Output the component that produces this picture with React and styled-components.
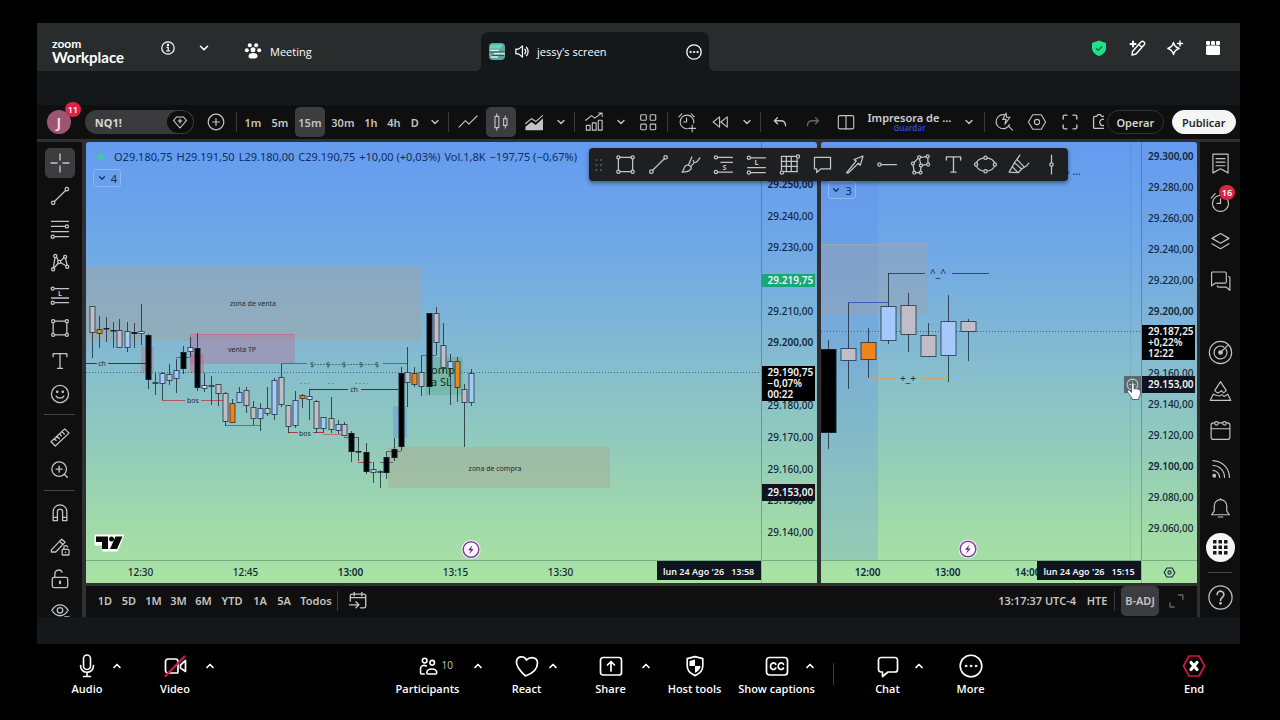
import React from "react";
import styled, { createGlobalStyle } from "styled-components";

const uiFont = '"Noto Sans", "Open Sans", sans-serif';

const GlobalStyle = createGlobalStyle`
  *, *::before, *::after { box-sizing: border-box; }
  body { margin: 0; background: #000; font-family: ${uiFont}; }
  button { font: inherit; color: inherit; background: none; border: 0; padding: 0; margin: 0; cursor: pointer; }
`;

/* ---------- window shell ---------- */

const Page = styled.div`
  min-height: 100vh;
  display: flex;
  flex-direction: column;
  background: #000;
  color: #fff;
`;

const MeetingWindow = styled.div`
  flex: 1;
  display: flex;
  flex-direction: column;
  margin: 23px 40px 0 37px;
  background: #14181b;
`;

const Header = styled.header`
  display: flex;
  align-items: stretch;
  height: 48px;
  background: #282c2d;
`;

const Brand = styled.div`
  width: 119px;
  padding: 14px 0 0 15px;
  font-family: Lato, sans-serif;
  font-weight: 700;
`;

const BrandTop = styled.div`
  font-size: 12px;
  line-height: 13px;
`;

const BrandName = styled.div`
  font-size: 15px;
  line-height: 15px;
`;

const HeaderIcons = styled.div`
  display: flex;
  gap: ${(p) => p.$gap}px;
  padding: 12px 15px 0 0;
  margin-left: ${(p) => (p.$end ? "auto" : "0")};
`;

const HeaderButton = styled.button`
  width: 24px;
  height: 26px;
  display: grid;
  place-items: center;
`;

const HeaderTab = styled.button`
  display: flex;
  align-items: center;
  gap: 8px;
  text-align: left;
  font-size: 11px;
  font-family: "Open Sans", sans-serif;
`;

const MeetingTab = styled(HeaderTab)`
  width: 250px;
  padding: 8px 0 0 13px;
`;

const ScreenTab = styled.div`
  position: relative;
  display: flex;
  align-items: center;
  width: 228px;
  margin-top: 9px;
  padding: 0 3px 0 8px;
  border-radius: 8px 8px 0 0;
  background: #14181b;
  &::before,
  &::after {
    content: "";
    position: absolute;
    bottom: 0;
    width: 6px;
    height: 6px;
  }
  &::before {
    left: -6px;
    background: radial-gradient(circle at 0 0, transparent 6px, #14181b 6px);
  }
  &::after {
    right: -6px;
    background: radial-gradient(circle at 100% 0, transparent 6px, #14181b 6px);
  }
`;

const ScreenTabName = styled(HeaderTab)`
  flex: 1;
`;

const Stage = styled.main`
  flex: 1;
  display: flex;
  flex-direction: column;
  padding: 34px 0 27px;
`;

/* ---------- trading workspace ---------- */

const Workspace = styled.section`
  flex: 1;
  display: flex;
  flex-direction: column;
  gap: 3px;
  min-width: 0;
  background: #303032;
  color: #c4c4c4;
`;

const TopBar = styled.div`
  display: flex;
  align-items: center;
  gap: 3px;
  height: 34px;
  padding: 0 4px 0 10px;
  background: #0f0f0f;
  font-size: 12px;
  font-weight: 600;
`;

const Avatar = styled.button`
  position: relative;
  width: 24px;
  height: 24px;
  border-radius: 50%;
  background: #9c5572;
  color: #f4dfe8;
  font-size: 15px;
  line-height: 24px;
`;

const Badge = styled.span`
  position: absolute;
  top: ${(p) => (p.$inner ? 1 : -8)}px;
  right: ${(p) => (p.$inner ? 0 : -10)}px;
  min-width: 16px;
  height: 15px;
  padding: 0 2px;
  border-radius: 8px;
  background: #dc2445;
  color: #fff;
  font-size: 9px;
  font-weight: 600;
  line-height: 15px;
  text-align: center;
`;

const SymbolPill = styled.button`
  display: flex;
  align-items: center;
  justify-content: space-between;
  width: 110px;
  height: 24px;
  margin: 0 3px 0 11px;
  padding: 0 1px 0 10px;
  border-radius: 12px;
  background: #3b3b3d;
  font-size: 11px;
  font-weight: 700;
  color: #d6d6d6;
`;

const SymbolMark = styled.span`
  display: grid;
  place-items: center;
  width: 26px;
  height: 22px;
  border-radius: 11px;
  background: #0f0f0f;
`;

const Tool = styled.button`
  flex: none;
  display: grid;
  place-items: center;
  width: ${(p) => p.$w || 30}px;
  height: ${(p) => p.$h || 30}px;
  border-radius: 5px;
  background: ${(p) => (p.$on ? "#3d3d3f" : "transparent")};
  color: ${(p) => (p.$dim ? "#666" : "inherit")};
  position: relative;
  overflow: ${(p) => (p.$clip ? "hidden" : "visible")};
`;

const IntervalButton = styled(Tool)`
  width: ${(p) => p.$w}px;
  font-size: 11px;
`;

const VRule = styled.span`
  flex: none;
  width: 1px;
  height: 20px;
  margin: 0 1px;
  background: #3a3a3c;
`;

const LayoutName = styled.button`
  width: 92px;
  display: flex;
  flex-direction: column;
  align-items: center;
  white-space: nowrap;
  color: #d0d0d0;
  font-size: 11px;
  line-height: 12px;
`;

const SaveHint = styled.span`
  font-size: 8px;
  line-height: 8px;
  color: #2f46c8;
`;

const PillButton = styled.button`
  height: 24px;
  width: ${(p) => p.$w}px;
  margin-left: ${(p) => (p.$push ? "auto" : "5px")};
  border-radius: 12px;
  border: 1px solid ${(p) => (p.$solid ? "#f5f5f5" : "#343436")};
  background: ${(p) => (p.$solid ? "#f5f5f5" : "transparent")};
  color: ${(p) => (p.$solid ? "#2a2a2a" : "#d4d4d4")};
  font-size: 11px;
  font-weight: 600;
`;

const WorkBody = styled.div`
  flex: 1;
  display: grid;
  grid-template-columns: 45px minmax(0, 1fr) 40px;
  grid-template-rows: minmax(0, 1fr);
  column-gap: 3px;
  min-height: 475px;
`;

const SideBar = styled.div`
  display: flex;
  flex-direction: column;
  align-items: center;
  gap: 3px;
  min-height: 0;
  height: 475px;
  overflow: hidden;
  padding-top: ${(p) => p.$top}px;
  background: #0f0f0f;
`;

const HRule = styled.span`
  flex: none;
  width: ${(p) => p.$w}px;
  height: 1px;
  margin: ${(p) => (p.$even ? "4px 0 3px" : "2px 0 4px")};
  background: #454547;
`;

const SideGap = styled.span`
  flex: none;
  height: 30px;
`;

const RoundApps = styled.span`
  display: grid;
  place-items: center;
  width: 29px;
  height: 29px;
  border-radius: 50%;
  background: #f5f5f5;
  color: #161616;
`;

const Center = styled.div`
  position: relative;
  display: flex;
  flex-direction: column;
  gap: 3px;
  min-width: 0;
  padding-left: 1px;
`;

const Panes = styled.div`
  flex: 1;
  display: grid;
  grid-template-columns: minmax(0, 66fr) minmax(0, 34fr);
  column-gap: 4px;
`;

const Pane = styled.div`
  display: grid;
  grid-template-columns: minmax(0, 1fr) 56px;
  grid-template-rows: minmax(0, 1fr) 23px;
  border-radius: 3px 3px 0 0;
  color: #10283a;
  background: linear-gradient(#649bf0 0%, #70a8e7 24%, #85bccf 50%, #93cdb9 71%, #a1daa9 87%, #a9e3a3 100%);
`;

const Plot = styled.div`
  position: relative;
  min-width: 0;
  overflow: hidden;
`;

const PlotCanvas = styled.svg`
  position: absolute;
  inset: 0;
  width: 100%;
  height: 100%;
  font-family: ${uiFont};
`;

const Legend = styled.div`
  position: relative;
  display: flex;
  align-items: center;
  gap: 4px;
  padding: 7px 0 0 12px;
  font-size: 11px;
  line-height: 16px;
  white-space: nowrap;
  color: #0e2d5c;
`;

const LiveDot = styled.span`
  width: 6px;
  height: 6px;
  margin-right: 6px;
  border-radius: 50%;
  background: #42c4a6;
  box-shadow: 0 0 0 2px rgba(66, 196, 166, 0.3);
`;

const CountButton = styled.button`
  position: relative;
  display: flex;
  align-items: center;
  justify-content: center;
  gap: 4px;
  width: 28px;
  height: 18px;
  margin: ${(p) => (p.$low ? "39px 0 0 7px" : "4px 0 0 7px")};
  border: 1px solid #8db9f3;
  border-radius: 3px;
  font-size: 11px;
  color: #0e2d5c;
`;

const PriceAxis = styled.div`
  position: relative;
  display: flex;
  flex-direction: column;
  justify-content: space-between;
  padding: ${(p) => p.$pad};
  border-left: 1px solid rgba(30, 70, 90, 0.35);
  font-size: 10px;
  line-height: 16px;
`;

const AxisPrice = styled.span`
  height: 16px;
  padding-left: 6px;
  font-weight: ${(p) => (p.$strong ? 600 : 500)};
`;

const PriceTag = styled.span`
  position: absolute;
  left: 0;
  top: ${(p) => p.$top}px;
  width: 53px;
  padding: ${(p) => p.$padY || 1}px 0 ${(p) => p.$padY || 1}px 6px;
  background: ${(p) => p.$bg};
  color: #f0f3f5;
  font-weight: 600;
  line-height: 11px;
  white-space: pre-line;
`;

const TimeAxis = styled.div`
  position: relative;
  display: flex;
  align-items: center;
  overflow: hidden;
  padding-left: ${(p) => p.$start}px;
  border-top: 1px solid rgba(30, 80, 70, 0.35);
  font-size: 10px;
`;

const TimeMark = styled.span`
  flex: none;
  width: ${(p) => p.$w}px;
  text-align: center;
  font-weight: ${(p) => (p.$strong ? 600 : 500)};
`;

const TimeTag = styled.span`
  position: absolute;
  right: 0;
  top: 0;
  width: 104px;
  height: 19px;
  background: #10141f;
  color: #f0f3f5;
  font-size: 9px;
  font-weight: 600;
  line-height: 22px;
  text-align: center;
  white-space: pre;
`;

const AxisCorner = styled.div`
  display: grid;
  place-items: center;
  border-top: 1px solid rgba(30, 80, 70, 0.35);
  border-left: 1px solid rgba(30, 70, 90, 0.25);
`;

const AddAtPrice = styled.button`
  position: absolute;
  right: 0;
  top: 234px;
  width: 17px;
  height: 17px;
  display: grid;
  place-items: center;
  background: #5a6a70;
  color: #c2ccd0;
`;

const Hand = styled.svg`
  position: absolute;
  right: -2px;
  top: 239px;
`;

const FloatingTools = styled.div`
  position: absolute;
  top: 6px;
  left: 504px;
  width: 479px;
  height: 33px;
  display: flex;
  align-items: center;
  border-radius: 4px;
  background: #1e1f20;
  box-shadow: 0 2px 4px rgba(0, 0, 0, 0.45);
`;

const Grip = styled.span`
  display: grid;
  place-items: center;
  width: 20px;
  color: #5c5c5c;
`;

const FloatTool = styled.button`
  flex: 1;
  display: grid;
  place-items: center;
`;

const BottomBar = styled.div`
  display: flex;
  align-items: center;
  height: 31px;
  padding: 0 9px 2px 7px;
  background: #0f0f0f;
  font-size: 11px;
  font-weight: 600;
`;

const RangeButton = styled.button`
  width: ${(p) => p.$w}px;
  white-space: nowrap;
`;

const BarEnd = styled.div`
  margin-left: auto;
  display: flex;
  align-items: center;
  gap: 5px;
`;

const ClockButton = styled.button`
  margin-right: 5px;
`;

/* ---------- meeting controls ---------- */

const Controls = styled.footer`
  display: flex;
  justify-content: space-between;
  height: 76px;
  padding: 10px 56px 0 48px;
`;

const ControlGroup = styled.div`
  display: flex;
  gap: 5px;
  padding-right: ${(p) => (p.$main ? 6 : 0)}px;
`;

const Control = styled.div`
  display: grid;
  width: ${(p) => p.$w}px;
  height: 44px;
`;

const ControlMain = styled.button`
  grid-area: 1 / 1;
  display: flex;
  flex-direction: column;
  align-items: center;
  gap: 3px;
  white-space: nowrap;
  font-family: "Open Sans", sans-serif;
  font-size: 11px;
  font-weight: 600;
  line-height: 16px;
`;

const ControlIcon = styled.span`
  position: relative;
  display: grid;
  place-items: center;
  height: 24px;
`;

const Count = styled.span`
  position: absolute;
  left: 100%;
  top: 3px;
  margin-left: 4px;
  font-size: 10px;
  font-weight: 400;
  color: #c9c9c9;
`;

const Caret = styled.button`
  grid-area: 1 / 1;
  justify-self: end;
  align-self: start;
  display: grid;
  place-items: center;
  width: 18px;
  height: 24px;
`;

const ControlRule = styled.span`
  width: 1px;
  height: 22px;
  margin: 9px 9px 0;
  background: #3c3c3c;
`;

/* ---------- drawings ---------- */

const Svg = ({ s = 26, box = 28, sw = 1.3, children }) => (
  <svg
    width={s}
    height={s}
    viewBox={`0 0 ${box} ${box}`}
    fill="none"
    stroke="currentColor"
    strokeWidth={sw}
    strokeLinecap="round"
    strokeLinejoin="round"
    aria-hidden="true"
  >
    {children}
  </svg>
);

const Dots = ({ at, r = 1.8 }) => at.map(([x, y]) => <circle key={`${x}-${y}`} cx={x} cy={y} r={r} />);

const Letter = ({ x, y, children }) => (
  <text x={x} y={y} fontSize="8" fontWeight="700" textAnchor="middle" fill="currentColor" stroke="none">
    {children}
  </text>
);

const Chevron = ({ up, s = 12, sw = 1.4 }) => (
  <Svg s={s} box={12} sw={sw}>
    <path d={up ? "M3 7.5 6 4.5l3 3" : "M3 4.5l3 3 3-3"} />
  </Svg>
);

const icons = {
  cross: <path d="M14 3.5v7M14 17.5v7M3.500 14h7M17.500 14h7" strokeWidth="1.600" />,
  trend: (<><Dots at={[[6, 22], [22, 6]]} r={2} /><path d="M7.500 20.500 20.500 7.500" /></>),
  fib: (<><path d="M4 5h20M4 11h16M4 17h20M8 23h16" /><Dots at={[[22, 11], [5.5, 23]]} /></>),
  pattern: (<><Dots at={[[8.500, 7], [20, 8], [13, 14], [6, 22.500], [22.500, 19.500]]} /><path d="M8.200 9 6.300 20.500M10 8.300l2 4M14.500 13 18.500 9M20.500 10l1.700 7.500M12 15.500 7 21M15 14.800l6 3.500" /></>),
  longPos: (<><path d="M8 6.500h16M4 17.500h20M8 23h16" /><Dots at={[[5.500, 6.500], [5.500, 23]]} /><Letter x={14} y={15}>L</Letter></>),
  rect: (<><Dots at={[[6, 6], [22, 6], [6, 22], [22, 22]]} /><path d="M8 6h12M8 22h12M6 8v12M22 8v12" /></>),
  text: <path d="M6 9V5.500h16V9M14 5.500v17M11 22.500h6" strokeWidth="1.500" />,
  smile: (<><circle cx="14" cy="14" r="10" /><path d="M9.500 16.500c1.500 3 7.500 3 9 0" /><circle cx="10.800" cy="11.500" r=".8" fill="currentColor" /><circle cx="17.200" cy="11.500" r=".8" fill="currentColor" /></>),
  ruler: <path d="M3.500 19.500 19.500 4.500l5 5-16 15zM7.500 16l2 2M10.500 13.200l2.800 2.800M13.500 10.500l2 2M16.300 7.800l2.700 2.700" />,
  zoomIn: (<><circle cx="13" cy="13" r="8.500" /><path d="M13 9.500v7M9.500 13h7M19 19l3.500 3.500" strokeWidth="1.600" /></>),
  magnet: <path d="M6 23V12.500a8 8 0 0 1 16 0V23h-5V12.500a3 3 0 0 0-6 0V23zM6 19h5M17 19h5" />,
  pencilLock: (<><path d="M4 18.500 16 6l4 3.500L9 21H4zM13.500 8.500l4 4" /><rect x="16.500" y="18" width="8" height="6.500" rx="1" /><path d="M18.500 18v-2a2.200 2.200 0 0 1 4.300-.8M20.500 21v.6" /></>),
  lock: (<><rect x="5" y="12" width="18" height="12" rx="2" /><path d="M8 12V8a4.500 4.500 0 0 1 8.500-2" /><path d="M14 17v2" strokeWidth="2.500" /></>),
  eye: (<><path d="M4.500 12c5-8.500 14-8.500 19 0-5 8.500-14 8.500-19 0z" /><circle cx="14" cy="12" r="3.200" /><path d="M20 20.500h4" strokeWidth="3" /></>),
  lineChart: <path d="M3.500 20 11 12.500l4 4L24.500 7" />,
  candles: (<><path d="M9 4.500v3M9 20.500v3M19 7v3M19 18v3" /><rect x="7" y="7.500" width="4.500" height="13" /><rect x="17" y="10" width="4" height="8" /></>),
  area: (<><path d="M4 23.500v-4l7-5.500 5 3.500 8.500-8v14z" fill="currentColor" stroke="none" /><path d="M4 16l7-6 5 3.500L24 6.500" /></>),
  indicators: (<><path d="M4.500 12 11 6.500l4 3 8-6M19.500 3.500h4v4" /><path d="M5 23.500v-5.500h4.500v5.500zM12 23.500v-8.500h4.500v8.500zM19 23.500V12h4.500v11.500z" /></>),
  tiles: (<><rect x="5.500" y="5.500" width="6.500" height="6.500" rx="1" /><rect x="16.500" y="5.500" width="6.500" height="6.500" rx="1" /><rect x="5.500" y="16.500" width="6.500" height="6.500" rx="1" /><rect x="16.500" y="16.500" width="6.500" height="6.500" rx="1" /></>),
  alarmAdd: (<><path d="M14.500 21.900A8 8 0 1 1 21.900 15M13.500 9.500V14H10M4.500 8 8 4.500M19 4.500 22.500 8M20 17.500v8M16 21.500h8" /></>),
  replay: <path d="M13.500 8v12L6 14zM22.500 8v12L15 14z" />,
  undo: <path d="M11 9 7.500 12.500 11 16M8 12.500h6.500c4 0 6 2 6 6" strokeWidth="1.600" />,
  redo: <path d="M17 9l3.500 3.500L17 16M20 12.500h-6.500c-4 0-6 2-6 6" strokeWidth="1.600" />,
  split: (<><rect x="5" y="6.500" width="18" height="15.500" rx="1.500" /><path d="M14 6.500V22" /></>),
  quick: (<><path d="M14.500 5.500A8.200 8.200 0 1 0 20.500 17M19 18.500l5 5" /><path d="M16.500 3.500 12.500 11h4l-1.500 5.500 6-8h-4z" /></>),
  hex: (<><path d="M9 5.500h10l5 8.500-5 8.500H9L4 14z" /><circle cx="14" cy="14" r="3" /></>),
  full: <path d="M6 10.500V8a2 2 0 0 1 2-2h2.500M17.500 6H20a2 2 0 0 1 2 2v2.500M22 17.500V20a2 2 0 0 1-2 2h-2.500M10.500 22H8a2 2 0 0 1-2-2v-2.500" strokeWidth="1.600" />,
  camera: <path d="M19 7.500h-3l-1.500-2h-3l-1.500 2H8a1.500 1.500 0 0 0-1.500 1.500v11a1.500 1.500 0 0 0 1.500 1.500h11M19 11a3.800 3.800 0 1 0 0 7" strokeWidth="1.500" />,
  brush: <path d="M4.500 22.500c1.500-1 1.800-3 2.500-5 1-3 5-4 7-1.500s0 6.500-9.500 6.500zM12 14l3.500-8.500M14.500 16l3-3.500M17 9.500c1.500 3.500 3 3.500 7.500-3" />,
  shortPos: (<><path d="M8 6h16M11 11.500h13M8 22.500h16" /><Dots at={[[5.500, 6], [5.500, 22.500]]} /><Letter x={15} y={20}>S</Letter></>),
  grid: (<><path d="M5 5h16.500M5 10.500h18M5 16h18M8 22h15M5 5v15M10.500 5v17M16 5v17M22.500 8v14" /><Dots at={[[23.500, 5], [5.500, 23]]} /></>),
  comment: <path d="M5 6h18v13H12l-4.500 4v-4H5z" />,
  arrow: <path d="M5 23.500 16 10l-2.500-1.500L23.500 4.500l-3 10.500-2-2.500L7 23.500z" />,
  ray: (<><circle cx="5" cy="14" r="1.800" /><path d="M7 14h17" /></>),
  path: (<><Dots at={[[5.500, 13], [12.500, 6], [22, 5], [22.500, 14], [14.500, 15], [7, 23], [14, 23]]} r={1.700} /><path d="M6.700 11.800 11.300 7.200M14.200 5.900l6.100-.7M22.200 6.700l.2 5.600M20.800 14.200l-4.600.6M5.700 14.700 6.800 21.300M8.700 23h3.600M14.400 16.700 14.100 21.300M12.800 7.700 14.200 13.300" /></>),
  ellipse: (<><ellipse cx="14" cy="14" rx="10.500" ry="7.500" /><g fill="#1e1f20"><Dots at={[[14, 6.500], [14, 21.500], [3.500, 14], [24.500, 14]]} /></g></>),
  highlighter: <path d="M3.500 22.500 9.500 12l8 7-3.500 4zM9.500 12l6-8.500M17.500 19l5.500-3.500 2.500-3M7 16.500l5.500 5.500M12.500 8.500l8 8.500" />,
  vline: (<><path d="M14 3.500v8.500M14 16v8.500" /><circle cx="14" cy="14" r="1.900" /></>),
  watch: <path d="M5.500 3.500h17v21l-8.500-4.500-8.500 4.500zM9 8.500h10M9 12.500h10M9 16.500h10" />,
  alarm: (<><circle cx="14" cy="15" r="9" /><path d="M14 9.500V15h-4M3.500 9 8 4" /></>),
  layers: <path d="M14 5 4.500 10.500 14 16l9.500-5.500zM4.500 16.500 14 22l9.500-5.500" />,
  chat: <path d="M5 4.500h14a1.500 1.500 0 0 1 1.500 1.500v9.500a1.500 1.500 0 0 1-1.500 1.500H8L4 20V5.500a1 1 0 0 1 1-1zM23 9.500a1.500 1.500 0 0 1 1.500 1.500V25L20.500 21.500H12a2 2 0 0 1-1.500-1.500" />,
  radar: (<><circle cx="14" cy="14" r="12.500" /><path d="M20 10a7.200 7.200 0 1 1-2.500-2.300M14 14 22.500 5.500" /><circle cx="14" cy="14" r="2" fill="currentColor" /></>),
  peaks: <path d="M14 3 20.500 13l-3 2.500-2.500-2.500-2.500 2-2 .5-3-2.500zM5.800 17 2.500 24h23l-3.300-7-4.200 2.500-2.500-2-2.500 1.500-3-.5z" />,
  calendar: (<><rect x="3.500" y="5.500" width="21" height="18.500" rx="2.500" /><path d="M3.500 12h21" /><g fill="#0f0f0f"><Dots at={[[9.500, 6], [18.500, 6]]} r={2} /></g></>),
  rss: (<><circle cx="7" cy="21" r="1.500" fill="currentColor" /><path d="M5.500 15a8 8 0 0 1 7.500 8M5.500 9.500a13 13 0 0 1 13 13.500M5.500 4a19 19 0 0 1 18.500 19" /></>),
  bell: <path d="M14 4a7 7 0 0 0-7 7v6l-3 4h20l-3-4v-6a7 7 0 0 0-7-7zM14 4V3M11.500 23.500h5" />,
  help: (<><circle cx="14" cy="14" r="12" /><path d="M10.500 11a3.500 3.500 0 1 1 5.500 2.800c-1.300 1-2 1.500-2 3.200" strokeWidth="1.700" /><circle cx="14" cy="20" r=".8" fill="currentColor" /></>),
  gotoDate: <path d="M5 14V8a2 2 0 0 1 2-2h14a2 2 0 0 1 2 2v12a2 2 0 0 1-2 2h-4M5 10h18M9.500 4v4M18.500 4v4M4 18.500h11M11.500 15l3.500 3.500-3.500 3.500" strokeWidth="1.600" />,
  corners: <path d="M17 7h5v5M12 21H7v-5" />,
};

const Icon = ({ n, s, sw }) => <Svg s={s} sw={sw}>{icons[n]}</Svg>;

const colours = { g: "#c0bdc8", b: "#a5c9fb", o: "#f08418", k: "#000", w: "#c5dcf4" };

/* x, high, body top, body bottom, low, colour */
const leftCandles = [
  [92, 306, 306, 333, 358, "g"], [99, 316, 329, 334, 348, "o"], [106, 317, 328, 329, 342, "k"],
  [113, 322, 330, 331, 348, "k"], [119, 319, 330, 348, 348, "g"], [127, 322, 331, 348, 352, "b"],
  [134, 323, 332, 334, 348, "k"], [141, 304, 331, 334, 345, "w"], [148, 334, 335, 380, 389, "k"],
  [155, 373, 382, 384, 395, "g"], [162, 372, 373, 384, 400, "b"], [169, 364, 374, 381, 385, "g"],
  [176, 359, 370, 379, 393, "b"], [183, 346, 352, 369, 374, "k"], [190, 337, 347, 352, 357, "w"],
  [197, 333, 348, 388, 391, "k"], [204, 373, 385, 389, 392, "w"], [211, 376, 385, 387, 405, "b"],
  [218, 384, 384, 394, 406, "g"], [225, 392, 393, 422, 426, "g"], [232, 399, 403, 423, 423, "o"],
  [239, 387, 392, 403, 403, "b"], [246, 387, 390, 406, 413, "g"], [253, 401, 407, 419, 425, "g"],
  [260, 403, 408, 419, 431, "b"], [267, 387, 408, 414, 416, "g"], [274, 378, 380, 415, 420, "b"],
  [281, 364, 377, 405, 407, "g"], [288, 405, 405, 427, 433, "g"], [295, 391, 400, 426, 428, "b"],
  [302, 394, 395, 399, 408, "o"], [309, 390, 396, 400, 420, "w"], [316, 400, 401, 429, 433, "g"],
  [323, 417, 417, 429, 433, "b"], [331, 397, 418, 430, 433, "g"], [338, 420, 424, 431, 434, "b"],
  [344, 422, 424, 436, 436, "g"], [351, 431, 433, 452, 462, "k"], [358, 437, 451, 452, 461, "k"],
  [366, 443, 452, 472, 474, "k"], [373, 462, 469, 473, 483, "b"], [380, 470, 471, 473, 488, "g"],
  [386, 452, 457, 473, 479, "k"], [394, 438, 449, 458, 461, "k"], [401, 367, 373, 447, 451, "k"],
  [407, 347, 372, 383, 407, "g"], [414, 367, 373, 385, 387, "o"], [421, 356, 372, 387, 396, "g"],
  [429, 313, 313, 387, 395, "k"], [436, 307, 313, 343, 355, "g"], [443, 323, 345, 368, 372, "g"],
  [450, 354, 361, 369, 405, "b"], [457, 357, 361, 388, 402, "o"], [464, 384, 389, 403, 447, "g"],
  [471, 369, 373, 403, 406, "b"],
];

const rightCandles = [
  [828, 340, 349, 433, 449, "k"], [848, 303, 348, 361, 389, "g"], [868, 328, 342, 360, 378, "o"],
  [888, 273, 306, 341, 344, "b"], [908, 293, 305, 335, 352, "g"], [928, 323, 335, 357, 357, "g"],
  [948, 295, 321, 356, 382, "b"], [968, 319, 321, 332, 361, "g"],
];

const Candles = ({ data, w }) =>
  data.map(([x, hi, top, bot, lo, c]) => (
    <g key={x} stroke="#14202c" strokeWidth="1">
      <line x1={x + 0.5} x2={x + 0.5} y1={hi} y2={lo} strokeOpacity=".75" />
      <rect x={x - (w - 1) / 2} y={top + 0.5} width={w} height={Math.max(bot - top - 1, 0.5)} fill={colours[c]} strokeOpacity={c === "k" ? 1 : 0.7} />
    </g>
  ));

const Bolt = ({ x, y }) => (
  <g>
    <circle cx={x} cy={y} r="9.500" fill="#fff" fillOpacity=".8" />
    <circle cx={x} cy={y} r="7.800" fill="#fff" stroke="#8a3aa8" strokeWidth="1.500" />
    <path d={`M${x + 1.5} ${y - 4.5}l-4.500 5.200h2.700l-1.500 4 4.500-5.200h-2.700z`} fill="#7b1fa2" />
  </g>
);

const Label = ({ x, y, size = 7, children, fill = "#1c2c34" }) => (
  <text x={x} y={y} fontSize={size} textAnchor="middle" fill={fill}>{children}</text>
);

const Line = ({ x1, x2, y, c = "#27404a", o = 1, dash }) => (
  <line x1={x1} x2={x2} y1={y + 0.5} y2={y + 0.5} stroke={c} strokeOpacity={o} strokeDasharray={dash} />
);

const LeftDrawing = () => (
  <PlotCanvas role="img" aria-label="NQ1! 15m">
    <g transform="translate(-86 -142)">
      <rect x="86" y="266" width="335" height="75" fill="#a2a2a0" fillOpacity=".48" />
      <rect x="388" y="447" width="222" height="41" fill="#b29c80" fillOpacity=".34" />
      <rect x="190" y="334" width="105" height="30" fill="#b07a9e" fillOpacity=".48" />
      <path d="M190 334.500h105" stroke="#b8788e" />
      <rect x="141" y="346" width="13" height="26" fill="#c86f84" fillOpacity=".4" />
      <rect x="190" y="354" width="14" height="19" fill="#d0607c" fillOpacity=".45" />
      <rect x="393" y="406" width="14" height="32" fill="#5f8fe0" fillOpacity=".4" />
      <rect x="425" y="357" width="38" height="38" fill="#5aa878" fillOpacity=".35" />
      <Line x1={86} x2={762} y={372} c="#3a6c74" dash="1 2" />
      <Line x1={86} x2={97} y={363} />
      <Line x1={108} x2={147} y={363} />
      <Label x={102} y={366}>ch</Label>
      <Line x1={162} x2={185} y={400} c="#b05a60" />
      <Line x1={201} x2={223} y={400} c="#b05a60" />
      <Label x={193} y={403}>bos</Label>
      <Line x1={225} x2={260} y={425} c="#c05048" />
      <Line x1={288} x2={298} y={432} c="#b03844" />
      <Line x1={313} x2={323} y={432} c="#b03844" />
      <Line x1={323} x2={345} y={434} c="#c07070" />
      <Label x={305} y={436}>bos</Label>
      <Line x1={281} x2={307} y={363} c="#a04c68" />
      <Line x1={383} x2={408} y={363} c="#a04c68" />
      <Line x1={314} x2={376} y={364} dash="2 1" o={0.6} />
      {[312, 328, 344, 361, 377].map((x) => <Label key={x} x={x} y={367} fill="#274c3c">$</Label>)}
      <Line x1={300} x2={309} y={383} c="#5e98a0" dash="2 2" />
      <Line x1={328} x2={336} y={383} c="#5e98a0" dash="2 2" />
      <Line x1={355} x2={368} y={383} c="#5e98a0" dash="2 2" />
      <Line x1={309} x2={348} y={389} />
      <Line x1={361} x2={398} y={389} />
      <Label x={354} y={392}>ch</Label>
      <Line x1={421} x2={436} y={355} c="#3a6aa0" />
      <Line x1={358} x2={372} y={462} c="#b84050" />
      <Line x1={380} x2={393} y={462} c="#5a6a80" />
      <Line x1={386} x2={401} y={451} c="#5a6a80" />
      <Line x1={344} x2={358} y={437} c="#5a6a60" />
      <Line x1={176} x2={190} y={357} c="#3a6aa0" />
      <Label x={253} y={306}>zona de venta</Label>
      <Label x={242} y={352}>venta TP</Label>
      <Label x={495} y={471}>zona de compra</Label>
      <Candles data={leftCandles} w={5} />
      <g fontSize="11" fill="#123020">
        <text x="431" y="374">omp</text>
        <text x="431" y="386">a SL</text>
      </g>
      <path d="M95.500 535.500h27.500l-6 15h-14v-6h-7.500z" fill="#fff" stroke="#fff" strokeWidth="2" strokeLinejoin="round" />
      <path d="M96 536.500h12v12.500h-6v-7h-6zM115.500 536.500h7l-5.500 12.500h-7z" fill="#0a0a0a" />
      <circle cx="111.500" cy="539" r="2.500" fill="#0a0a0a" />
      <Bolt x={471} y={549.5} />
    </g>
  </PlotCanvas>
);

const RightDrawing = () => (
  <PlotCanvas role="img" aria-label="NQ1! 1h">
    <g transform="translate(-821 -142)">
      <rect x="821" y="142" width="57" height="418" fill="#5582ee" fillOpacity=".22" />
      <rect x="821" y="244" width="107" height="71" fill="#a2a0a4" fillOpacity=".4" />
      <path d="M821 244.500h107" stroke="#9cb0a0" strokeOpacity=".6" />
      <Line x1={821} x2={1141} y={331} c="#3a6c84" dash="1 2" />
      <line x1="1130.500" x2="1130.500" y1="142" y2="560" stroke="#2c5c72" strokeOpacity=".12" />
      <Line x1={848} x2={888} y={302} c="#3a5fb4" />
      <Line x1={888} x2={925} y={273} c="#2743b8" />
      <Line x1={952} x2={989} y={273} c="#2743b8" />
      <Label x={938} y={277} size={10} fill="#16304e">^_^</Label>
      <Line x1={870} x2={895} y={378} c="#bfa978" />
      <Line x1={922} x2={948} y={378} c="#bfa978" />
      <Label x={908} y={382} size={10} fill="#16304e">+_+</Label>
      <Candles data={rightCandles} w={15} />
      <text x="1063" y="175" fontSize="11" fill="#0e2d5c">5 ...</text>
      <Bolt x={968} y={549} />
    </g>
  </PlotCanvas>
);

/* ---------- data ---------- */

const quote = ["O29.180,75", "H29.191,50", "L29.180,00", "C29.190,75", "+10,00 (+0,03%)", "Vol.1,8K", "−197,75 (−0,67%)"];

/* An empty entry leaves room for a level that a price tag occupies. */
const leftPrices = ["29.250,00", "29.240,00", "29.230,00", "", "29.210,00", "29.200,00", "", "29.180,00", "29.170,00", "29.160,00", "29.150,00", "29.140,00"];
const rightPrices = ["29.300,00", "29.280,00", "29.260,00", "29.240,00", "29.220,00", "29.200,00", "", "29.160,00", "29.140,00", "29.120,00", "29.100,00", "29.080,00", "29.060,00"];
const strongPrices = ["29.250,00", "29.200,00", "29.150,00", "29.300,00", "29.100,00"];

const Axis = ({ prices, pad, children }) => (
  <PriceAxis $pad={pad}>
    {prices.map((p, i) => <AxisPrice key={i} $strong={strongPrices.includes(p)}>{p}</AxisPrice>)}
    {children}
  </PriceAxis>
);

const intervals = [["1m", 24], ["5m", 24], ["15m", 30], ["30m", 30], ["1h", 20], ["4h", 20], ["D", 16]];
const ranges = [["1D", 24], ["5D", 24], ["1M", 25], ["3M", 25], ["6M", 25], ["YTD", 32], ["1A", 24], ["5A", 24], ["Todos", 40]];

const topTools = [
  ["lineChart", "Línea"], ["candles", "Velas"], ["area", "Área"], ["v"], ["|"],
  ["indicators", "Indicadores"], ["v"], ["tiles", "Plantillas"], ["|"],
  ["alarmAdd", "Alerta"], ["replay", "Repetición"], ["v"], ["|"],
  ["undo", "Deshacer"], ["redo", "Rehacer"], ["split", "Diseño"],
];

const drawTools = ["cross", "trend", "fib", "pattern", "longPos", "rect", "text", "smile", "|", "ruler", "zoomIn", "|", "magnet", "pencilLock", "lock", "eye"];
const floatTools = ["rect", "trend", "brush", "shortPos", "longPos", "grid", "comment", "arrow", "ray", "path", "text", "ellipse", "highlighter", "vline"];
const sideTools = ["watch", "alarm", "layers", "chat", "", "radar", "peaks", "calendar", "rss", "bell"];

const MeetingControl = ({ label, w, caret, count, children }) => (
  <Control $w={w}>
    <ControlMain>
      <ControlIcon>{children}{count && <Count>{count}</Count>}</ControlIcon>
      {label}
    </ControlMain>
    {caret && <Caret aria-label={`${label} options`}><Chevron up sw={1.7} /></Caret>}
  </Control>
);

/* ---------- sections ---------- */

const MeetingHeader = () => (
  <Header>
    <Brand>
      <BrandTop>zoom</BrandTop>
      <BrandName>Workplace</BrandName>
    </Brand>
    <HeaderIcons $gap={12}>
      <HeaderButton aria-label="Meeting information">
        <Svg s={16} box={16} sw={1.2}><circle cx="8" cy="8" r="6.200" /><path d="M7 7.300h1.200v3.500M6.500 11h3.200" /><circle cx="8" cy="5" r=".6" fill="currentColor" /></Svg>
      </HeaderButton>
      <HeaderButton aria-label="More views"><Chevron s={14} /></HeaderButton>
    </HeaderIcons>
    <MeetingTab>
      <svg width="18" height="18" viewBox="0 0 18 18" fill="#fff" aria-hidden="true">
        <circle cx="5.800" cy="3.300" r="2" /><circle cx="12.200" cy="3.300" r="2" />
        <circle cx="2.800" cy="8.300" r="2" /><circle cx="15.200" cy="8.300" r="2" /><circle cx="9" cy="7.800" r="2.500" />
        <path d="M4.500 14c0-2 2-3 4.500-3s4.500 1 4.500 3-1 2.500-4.500 2.500S4.500 16 4.500 14z" />
      </svg>
      Meeting
    </MeetingTab>
    <ScreenTab>
      <ScreenTabName>
        <svg width="17" height="17" viewBox="0 0 17 17" aria-hidden="true">
          <rect width="16" height="17" rx="4" fill="#5fa59c" />
          <path d="M2 2.500h12M1 4.500h11" stroke="#63d6c2" strokeWidth="2" />
          <path d="M1 7.500h9M5 10.500h11M2 14h7" stroke="#d9eee8" strokeWidth="1.500" />
          <path d="M0 9h16M3 12.500h12" stroke="#2d5a57" strokeWidth="1.200" />
        </svg>
        <Svg s={15} box={16} sw={1.3}><path d="M2 5.500h3L9 2v12l-4-3.500H2zM11.500 5.500c1.300 1.500 1.300 3.500 0 5M13.300 3.500c2.300 2.500 2.300 6.500 0 9" /></Svg>
        jessy's screen
      </ScreenTabName>
      <HeaderButton aria-label="Screen options">
        <Svg s={18} box={18} sw={1.3}><circle cx="9" cy="9" r="7.200" /><g fill="currentColor" strokeWidth=".6"><Dots at={[[5.5, 9], [9, 9], [12.5, 9]]} r={0.8} /></g></Svg>
      </HeaderButton>
    </ScreenTab>
    <HeaderIcons $gap={14} $end>
      <HeaderButton aria-label="Security">
        <svg width="18" height="18" viewBox="0 0 18 18" aria-hidden="true"><path d="M9 1.500 16 4v5c0 4-3 6.500-7 8-4-1.500-7-4-7-8V4z" fill="#1fe28a" /><path d="M6 9.200 8.200 11.300 12 7.500" fill="none" stroke="#14603f" strokeWidth="1.200" /></svg>
      </HeaderButton>
      <HeaderButton aria-label="Annotate">
        <Svg s={18} box={18} sw={1.4}><path d="M4.500 12.500 11.500 4.500 13 3a2 2 0 0 1 3 3l-8 9-4 1zM11 5.500l2.500 2.500" /><path d="M5 2.500v5M2.500 5h5" strokeWidth="2" /></Svg>
      </HeaderButton>
      <HeaderButton aria-label="AI Companion">
        <Svg s={18} box={18} sw={1.4}><path d="M7.500 3.500c.8 3.500 2 4.800 5.700 6-3.700 1.200-4.900 2.500-5.700 6-.8-3.500-2-4.800-5.700-6 3.700-1.200 4.900-2.500 5.700-6zM14 2v5M11.500 4.500h5" /></Svg>
      </HeaderButton>
      <HeaderButton aria-label="View">
        <svg width="16" height="16" viewBox="0 0 16 16" fill="#fff" aria-hidden="true"><rect x="1" y="1" width="4" height="4" rx="1" /><rect x="6" y="1" width="4" height="4" rx="1" /><rect x="11" y="1" width="4" height="4" rx="1" /><rect x="1" y="5.500" width="14" height="9.500" rx="1.500" /></svg>
      </HeaderButton>
    </HeaderIcons>
  </Header>
);

const WorkspaceTop = () => (
  <TopBar>
    <Avatar aria-label="Perfil">J<Badge>11</Badge></Avatar>
    <SymbolPill>
      NQ1!
      <SymbolMark><Svg s={16} box={16} sw={1.1}><path d="M4.500 3h7L14.500 6.500 8 14 1.500 6.500zM8 5v4M6 7h4" /></Svg></SymbolMark>
    </SymbolPill>
    <Tool $w={32} aria-label="Comparar"><Svg s={18} box={18} sw={1.2}><circle cx="9" cy="9" r="7.800" /><path d="M9 5.500v7M5.500 9h7" /></Svg></Tool>
    <VRule />
    {intervals.map(([t, w]) => <IntervalButton key={t} $w={w} $on={t === "15m"}>{t}</IntervalButton>)}
    <Tool $w={18} aria-label="Más intervalos"><Chevron /></Tool>
    <VRule />
    {topTools.map(([n, label], i) => {
      if (n === "|") return <VRule key={i} />;
      if (n === "v") return <Tool key={i} $w={18} aria-label="Más opciones"><Chevron /></Tool>;
      return <Tool key={i} $on={n === "candles"} $dim={n === "redo"} aria-label={label}><Icon n={n} s={24} /></Tool>;
    })}
    <LayoutName>Impresora de ...<SaveHint>Guardar</SaveHint></LayoutName>
    <Tool $w={22} aria-label="Diseños"><Chevron /></Tool>
    <VRule />
    <Tool aria-label="Búsqueda rápida"><Icon n="quick" s={24} /></Tool>
    <Tool aria-label="Configuración"><Icon n="hex" s={24} /></Tool>
    <Tool aria-label="Pantalla completa"><Icon n="full" s={24} /></Tool>
    <Tool $w={16} $clip aria-label="Captura"><Icon n="camera" s={24} /></Tool>
    <PillButton $w={57} $push>Operar</PillButton>
    <PillButton $w={65} $solid>Publicar</PillButton>
  </TopBar>
);

const LeftPane = () => (
  <Pane>
    <Plot>
      <LeftDrawing />
      <Legend>
        <LiveDot />
        {quote.map((q) => <span key={q}>{q}</span>)}
      </Legend>
      <CountButton><Chevron s={10} />4</CountButton>
    </Plot>
    <Axis prices={leftPrices} pad="34px 0 20px">
      <PriceTag $top={132} $bg="#16a878">29.219,75</PriceTag>
      <PriceTag $top={224} $bg="#000">{"29.190,75\n−0,07%\n00:22"}</PriceTag>
      <PriceTag $top={342} $padY={3} $bg="#10141f">29.153,00</PriceTag>
    </Axis>
    <TimeAxis $start={2}>
      {["12:30", "12:45", "13:00", "13:15", "13:30"].map((t) => <TimeMark key={t} $w={105} $strong={t === "13:00"}>{t}</TimeMark>)}
      <TimeTag>{"lun 24 Ago '26   13:58"}</TimeTag>
    </TimeAxis>
    <AxisCorner />
  </Pane>
);

const RightPane = () => (
  <Pane>
    <Plot>
      <RightDrawing />
      <CountButton $low><Chevron s={10} />3</CountButton>
      <AddAtPrice aria-label="Añadir en el precio"><Svg s={13} box={14} sw={1.1}><circle cx="7" cy="7" r="5.800" /><path d="M7 4v6M4 7h6" /></Svg></AddAtPrice>
      <Hand width="18" height="20" viewBox="0 0 18 20" aria-hidden="true">
        <path d="M6.500 3c0-1.800 2.600-1.800 2.600 0v5c2.500-.5 6.400.2 6.400 2.500 0 3.500-.8 5-1.800 6.500v1.500H7V17c-1-1.500-3.500-4.500-4.500-6.300-.7-1.400 1-2.200 2-1.200l2 2z" fill="#fff" stroke="#3c4a50" strokeWidth=".8" />
      </Hand>
    </Plot>
    <Axis prices={rightPrices} pad="6px 0 24px">
      <PriceTag $top={183} $bg="#000">{"29.187,25\n+0,22%\n12:22"}</PriceTag>
      <PriceTag $top={234} $padY={3} $bg="#10141f">29.153,00</PriceTag>
    </Axis>
    <TimeAxis $start={7}>
      {["12:00", "13:00", "14:00"].map((t) => <TimeMark key={t} $w={80} $strong>{t}</TimeMark>)}
      <TimeTag>{"lun 24 Ago '26   15:15"}</TimeTag>
    </TimeAxis>
    <AxisCorner><Icon n="hex" s={15} sw={2} /></AxisCorner>
  </Pane>
);

const MeetingControls = () => (
  <Controls>
    <ControlGroup>
      <MeetingControl label="Audio" w={78} caret>
        <Svg s={24} box={24} sw={1.6}><rect x="8.500" y="1" width="7" height="14.500" rx="3.500" /><path d="M5.500 11.500c0 9 13 9 13 0M12 18.500v4M8.500 22.500h7" /></Svg>
      </MeetingControl>
      <MeetingControl label="Video" w={88} caret>
        <Svg s={24} box={24} sw={1.7}><path d="M14.500 19H5a2.500 2.500 0 0 1-2.500-2.500v-9A2.500 2.500 0 0 1 5 5h7.500a2.500 2.500 0 0 1 2.500 2.500V18M17.500 11l5-4.500v11l-5-3.500z" /><path d="M2.500 22 21.500 2.500" stroke="#d4144c" strokeWidth="2.400" /></Svg>
      </MeetingControl>
    </ControlGroup>
    <ControlGroup $main>
      <MeetingControl label="Participants" w={118} caret count="10">
        <Svg s={20} box={24} sw={1.9}><circle cx="8" cy="5.500" r="2.800" /><circle cx="17" cy="8" r="2.800" /><path d="M7.500 21.500H4.500A1.500 1.500 0 0 1 3 20v-4c0-5 4-5.500 7-4M12 21.500h9a1.500 1.500 0 0 0 1.500-1.500c0-6-12-6-12 0 0 1 .5 1.500 1.500 1.500z" /></Svg>
      </MeetingControl>
      <MeetingControl label="React" w={70} caret>
        <Svg s={24} box={24} sw={1.7}><path d="M10.500 22C5 17 1 12 1.500 7.500 2 2 9 1 11.500 6c4-4 11-2.500 11 3 0 6-5 10.500-12 13z" /></Svg>
      </MeetingControl>
      <MeetingControl label="Share" w={88} caret>
        <Svg s={24} box={24} sw={1.7}><rect x="1.500" y="3.500" width="21" height="17.500" rx="2.500" /><path d="M12 17V8M8.500 11 12 7.500l3.500 3.500" /></Svg>
      </MeetingControl>
      <MeetingControl label="Host tools" w={70}>
        <Svg s={22} box={24} sw={1.8}><path d="M12 1.800 20.500 4v8c0 5-4 8.500-8.500 10.500C7.500 20.500 3.500 17 3.500 12V4z" /><path d="M12 5v7H6V6.500zM12 12h6c0 3.500-3 6-6 7.500z" fill="currentColor" stroke="none" /></Svg>
      </MeetingControl>
      <MeetingControl label="Show captions" w={84} caret>
        <Svg s={24} box={24} sw={1.7}><rect x="1.500" y="3.500" width="21" height="17.500" rx="3" /><path d="M10.800 10.300c-1.500-2.500-5.300-1.300-5.300 2s3.800 4.300 5.300 1.700M18.500 10.300c-1.500-2.500-5.300-1.300-5.300 2s3.800 4.300 5.300 1.700" /></Svg>
      </MeetingControl>
      <ControlRule />
      <MeetingControl label="Chat" w={80} caret>
        <Svg s={24} box={24} sw={1.7}><path d="M5 3.500h14a2.500 2.500 0 0 1 2.500 2.500v9.500a2.500 2.500 0 0 1-2.500 2.500H12l-5.500 4.500V18H5a2.500 2.500 0 0 1-2.500-2.500V6A2.500 2.500 0 0 1 5 3.500z" /></Svg>
      </MeetingControl>
      <MeetingControl label="More" w={76}>
        <Svg s={24} box={24} sw={1.6}><circle cx="12" cy="12" r="10.800" /><g fill="currentColor" strokeWidth=".8"><Dots at={[[7, 12], [12, 12], [17, 12]]} r={0.9} /></g></Svg>
      </MeetingControl>
    </ControlGroup>
    <MeetingControl label="End" w={60}>
      <Svg s={24} box={24} sw={1.7}><path d="M7 2h10l5.500 10L17 22H7L1.500 12z" stroke="#d4144c" /><path d="M9 8.500l6 7M15 8.500l-6 7" strokeWidth="3.200" /></Svg>
    </MeetingControl>
  </Controls>
);

export default function App() {
  return (
    <Page>
      <GlobalStyle />
      <MeetingWindow>
        <MeetingHeader />
        <Stage>
          <Workspace>
            <WorkspaceTop />
            <WorkBody>
              <SideBar $top={6}>
                {drawTools.map((n, i) => n === "|" ? <HRule key={i} $w={31} /> : <Tool key={i} $on={n === "cross"} aria-label={n}><Icon n={n} s={24} sw={1.5} /></Tool>)}
              </SideBar>
              <Center>
                <Panes>
                  <LeftPane />
                  <RightPane />
                </Panes>
                <BottomBar>
                  {ranges.map(([t, w]) => <RangeButton key={t} $w={w}>{t}</RangeButton>)}
                  <VRule />
                  <Tool $w={38} aria-label="Ir a la fecha"><Icon n="gotoDate" s={24} /></Tool>
                  <BarEnd>
                    <ClockButton>13:17:37 UTC-4</ClockButton>
                    <RangeButton $w={22}>HTE</RangeButton>
                    <VRule />
                    <Tool $w={38} $on>B-ADJ</Tool>
                    <Tool $w={24} $dim aria-label="Maximizar"><Icon n="corners" s={24} sw={1.6} /></Tool>
                  </BarEnd>
                </BottomBar>
                <FloatingTools>
                  <Grip><svg width="8" height="14" viewBox="0 0 8 14" fill="currentColor" aria-hidden="true"><circle cx="1.500" cy="2" r="1" /><circle cx="6" cy="2" r="1" /><circle cx="1.500" cy="7" r="1" /><circle cx="6" cy="7" r="1" /><circle cx="1.500" cy="12" r="1" /><circle cx="6" cy="12" r="1" /></svg></Grip>
                  {floatTools.map((n) => <FloatTool key={n} aria-label={n}><Icon n={n} s={25} sw={1.4} /></FloatTool>)}
                </FloatingTools>
              </Center>
              <SideBar $top={3}>
                {sideTools.map((n, i) => n ? <Tool key={i} $h={36} aria-label={n}><Icon n={n} s={25} />{n === "alarm" && <Badge $inner>16</Badge>}</Tool> : <SideGap key={i} />)}
                <Tool $h={36} aria-label="Apps">
                  <RoundApps><svg width="16" height="16" viewBox="0 0 16 16" fill="currentColor" aria-hidden="true">{[1, 6.5, 12].map((y) => [1, 6.5, 12].map((x) => <rect key={`${x}-${y}`} x={x} y={y} width="3.500" height="3.500" rx=".6" />))}</svg></RoundApps>
                </Tool>
                <HRule $w={24} $even />
                <Tool $h={36} aria-label="Ayuda"><Icon n="help" s={27} /></Tool>
              </SideBar>
            </WorkBody>
          </Workspace>
        </Stage>
      </MeetingWindow>
      <MeetingControls />
    </Page>
  );
}
